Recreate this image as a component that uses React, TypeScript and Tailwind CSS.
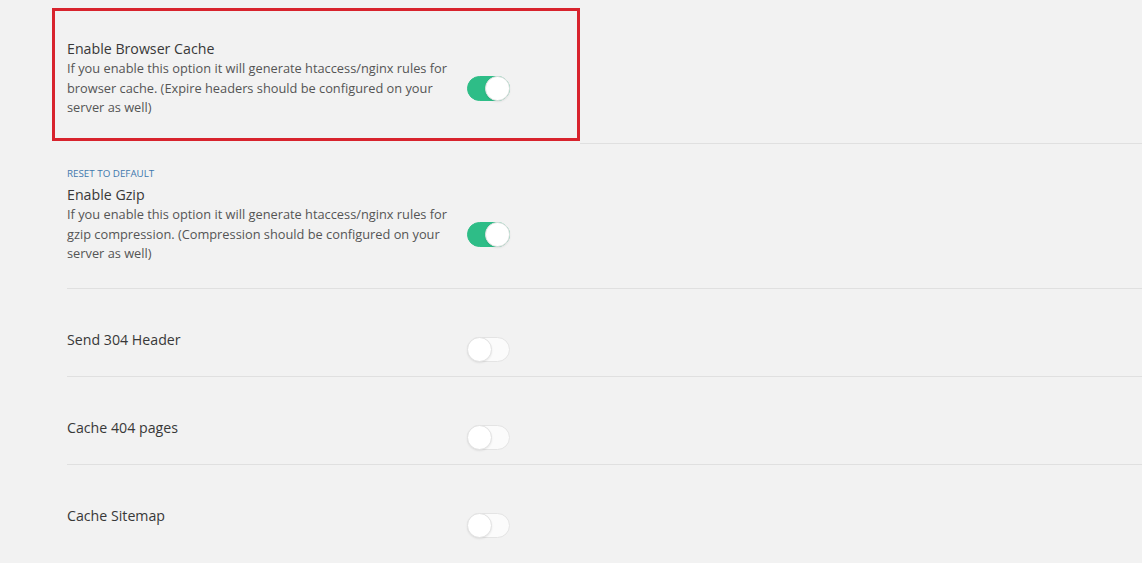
import React from 'react';

interface ToggleProps {
  on: boolean;
}

const Toggle: React.FC<ToggleProps> = ({ on }) => {
  return (
    <div
      className={`relative -my-[2.5px] h-[25px] w-[43px] shrink-0 translate-y-[10px] rounded-full border ${
        on ? 'border-[#2ebd87] bg-[#2ebd87]' : 'border-[#e4e4e4] bg-[#fbfbfb]'
      }`}
    >
      <span
        className={`absolute top-[-1px] h-[25px] w-[25px] rounded-full border border-[#e2e2e2] bg-white shadow-[0_1px_2px_rgba(0,0,0,0.08)] ${
          on ? 'right-[-1px]' : 'left-[-1px]'
        }`}
      />
    </div>
  );
};

interface SettingProps {
  title: string;
  desc?: string;
  on: boolean;
}

const SettingBody: React.FC<SettingProps> = ({ title, desc, on }) => {
  return (
    <div className="flex items-center">
      <div className="w-[400px] pr-3">
        <div className="text-[14.2px] leading-[20px] text-[#383838]">{title}</div>
        {desc && <p className="text-[12.8px] leading-[19.5px] text-[#555]">{desc}</p>}
      </div>
      <Toggle on={on} />
    </div>
  );
};

interface RowProps extends SettingProps {
  reset?: boolean;
  last?: boolean;
}

const SettingRow: React.FC<RowProps> = ({ reset, last, ...props }) => {
  return (
    <div
      className={`ml-[67px] pt-[20px] ${last ? '' : 'border-b border-[#e0e0e0]'} ${
        props.desc ? 'pb-[24px]' : 'pb-[26px]'
      }`}
    >
      <div
        className={`mb-[1px] h-[20px] text-[9.8px] uppercase leading-[20px] text-[#3f78ad] ${
          reset ? '' : 'invisible'
        }`}
      >
        Reset to default
      </div>
      <SettingBody {...props} />
    </div>
  );
};

const App: React.FC = () => {
  return (
    <div
      className="h-[563px] w-full overflow-hidden bg-[#f2f2f2]"
      style={{ fontFamily: '"Open Sans", "Noto Sans", sans-serif' }}
    >
      <div className="pt-2">
        <div className="ml-[52px] h-[133px] w-[528px] border-[3px] border-[#d8232d] pt-[28px] pl-[12px]">
          <SettingBody
            title="Enable Browser Cache"
            desc="If you enable this option it will generate htaccess/nginx rules for browser cache. (Expire headers should be configured on your server as well)"
            on
          />
        </div>
        <div className="mt-[2px] ml-[580px] h-px bg-[#e0e0e0]" />
      </div>

      <SettingRow
        reset
        title="Enable Gzip"
        desc="If you enable this option it will generate htaccess/nginx rules for gzip compression. (Compression should be configured on your server as well)"
        on
      />
      <SettingRow title="Send 304 Header" on={false} />
      <SettingRow title="Cache 404 pages" on={false} />
      <SettingRow title="Cache Sitemap" on={false} last />
    </div>
  );
};

export default App;
